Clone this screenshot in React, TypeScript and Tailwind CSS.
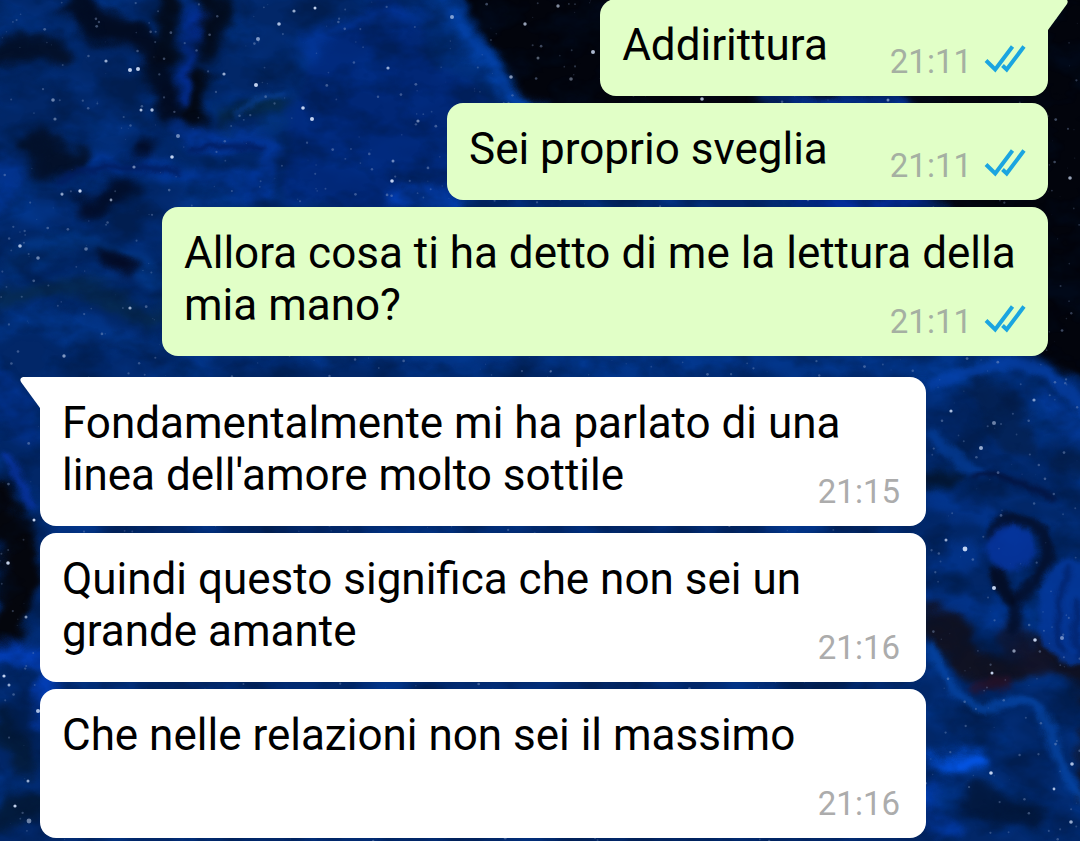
interface Message {
  id: number;
  text: string;
  time: string;
  sent: boolean;
  tail?: boolean;
}

const messages: Message[] = [
  { id: 1, text: "Addirittura", time: "21:11", sent: true, tail: true },
  { id: 2, text: "Sei proprio sveglia", time: "21:11", sent: true },
  { id: 3, text: "Allora cosa ti ha detto di me la lettura della mia mano?", time: "21:11", sent: true },
  { id: 4, text: "Fondamentalmente mi ha parlato di una linea dell'amore molto sottile", time: "21:15", sent: false, tail: true },
  { id: 5, text: "Quindi questo significa che non sei un grande amante", time: "21:16", sent: false },
  { id: 6, text: "Che nelle relazioni non sei il massimo", time: "21:16", sent: false },
];

// x, y, radius, opacity
const brightStars = [
  [130, 70, 2, 0.9], [138, 69, 2, 0.9], [106, 61, 1.6, 0.7], [141, 110, 1.5, 0.8], [152, 110, 1.7, 0.8],
  [53, 100, 1.8, 0.5], [55, 119, 1.6, 0.4], [172, 157, 1.8, 0.9], [178, 136, 2, 0.5], [256, 85, 2, 0.9],
  [224, 74, 1.6, 0.7], [258, 39, 2, 0.6], [279, 24, 1.8, 0.8], [294, 11, 1.6, 0.7], [315, 8, 1.5, 0.9],
  [303, 108, 1.8, 0.9], [312, 119, 2, 0.9], [392, 181, 1.8, 0.9], [393, 161, 1.5, 0.5], [418, 121, 1.6, 0.5],
  [388, 68, 1.6, 0.7], [80, 191, 1.7, 0.9], [62, 194, 1.6, 0.6], [111, 200, 1.4, 0.6], [134, 167, 1.6, 0.5],
  [20, 246, 1.8, 0.8], [38, 258, 1.8, 0.5], [86, 249, 1.8, 0.4], [130, 308, 1.6, 0.7], [64, 356, 1.7, 0.6],
  [34, 520, 1.5, 0.9], [8, 563, 1.8, 0.9], [26, 617, 1.5, 0.6], [4, 676, 1.6, 0.9], [9, 685, 1.5, 0.7],
  [38, 711, 2, 0.8], [15, 806, 1.6, 0.9], [29, 821, 2.4, 0.5], [28, 781, 1.5, 0.7],
  [951, 411, 1.6, 0.8], [994, 423, 2, 0.5], [981, 448, 2, 0.7], [965, 549, 2.4, 0.9], [946, 540, 1.5, 0.7],
  [994, 588, 2, 0.9], [1035, 640, 1.8, 0.9], [992, 673, 1.5, 0.9], [1014, 651, 1.7, 0.6], [991, 773, 1.8, 0.9],
  [1072, 764, 1.8, 0.8], [1071, 822, 1.8, 0.7], [1054, 789, 1.4, 0.8], [1034, 400, 1.6, 0.6], [1062, 638, 2, 0.5],
  [525, 24, 1.7, 0.7], [558, 6, 1.7, 0.6], [593, 52, 2, 0.8], [511, 77, 1.8, 0.6], [538, 58, 1.5, 0.4], [571, 79, 1.8, 0.4],
  [702, 99, 1.8, 0.8], [888, 100, 1.5, 0.5], [1070, 178, 1.8, 0.7], [452, 17, 2, 0.6],
];

// faint dust scattered over the whole wallpaper, same positions on each render
const dust = Array.from({ length: 1600 }, (_, i) => {
  const a = Math.abs(Math.sin(i * 12.9898) * 43758.5453) % 1;
  const b = Math.abs(Math.sin(i * 78.233 + 4) * 12543.123) % 1;
  const c = Math.abs(Math.sin(i * 39.425 + 9) * 9631.77) % 1;
  return [a * 1080, b * 841, 0.5 + c * 0.9, 0.1 + c * 0.35];
});

function Wallpaper() {
  return (
    <svg
      className="absolute inset-0 h-full w-full"
      viewBox="0 0 1080 841"
      preserveAspectRatio="xMidYMid slice"
      aria-hidden="true"
    >
      <defs>
        <filter id="swirl" x="-5%" y="-5%" width="110%" height="110%" colorInterpolationFilters="sRGB">
          <feGaussianBlur stdDeviation="5" result="soft" />
          <feTurbulence type="fractalNoise" baseFrequency="0.018 0.024" numOctaves="3" seed="8" result="noise" />
          <feDisplacementMap in="soft" in2="noise" scale="36" xChannelSelector="R" yChannelSelector="G" />
        </filter>
        <filter id="fine" x="-5%" y="-5%" width="110%" height="110%" colorInterpolationFilters="sRGB">
          <feGaussianBlur stdDeviation="2.4" result="soft" />
          <feTurbulence type="fractalNoise" baseFrequency="0.04" numOctaves="3" seed="3" result="noise" />
          <feDisplacementMap in="soft" in2="noise" scale="12" xChannelSelector="R" yChannelSelector="G" />
        </filter>
        <filter id="clouds" x="0" y="0" width="100%" height="100%" colorInterpolationFilters="sRGB">
          <feTurbulence type="fractalNoise" baseFrequency="0.02 0.03" numOctaves="4" seed="21" />
          <feColorMatrix values="0 0 0 0 0  0 0 0 0 0.07  0 0 0 0 0.18  3 0 0 0 -1.3" />
        </filter>
        <filter id="glow" x="0" y="0" width="100%" height="100%" colorInterpolationFilters="sRGB">
          <feTurbulence type="fractalNoise" baseFrequency="0.014 0.022" numOctaves="3" seed="47" />
          <feColorMatrix values="0 0 0 0 0.01  0 0 0 0 0.26  0 0 0 0 0.66  0 2.6 0 0 -1.1" />
        </filter>
      </defs>
      <rect width="1080" height="841" fill="#022768" />
      <rect width="1080" height="841" filter="url(#glow)" opacity="0.55" />

      <g filter="url(#swirl)" strokeLinecap="round" fill="none">
        {/* black sky at the top right */}
        <path d="M455 -20 C470 40 520 80 560 130 L700 150 L1000 220 L1030 350 L1110 400 L1110 -20 Z" fill="#02040c" />
        <path d="M385 -10 C430 30 440 60 475 90 L540 150 L400 220 L280 200 L300 60 Z" fill="#022880" opacity="0.6" />
        <path d="M440 5 C465 50 500 80 535 115" stroke="#0341a6" strokeWidth="16" />
        <path d="M300 50 C330 20 370 20 420 10" stroke="#0338a0" strokeWidth="16" opacity="0.8" />
        <path d="M770 101 H900" stroke="#03308f" strokeWidth="20" />
        <path d="M800 203 H930" stroke="#032d9c" strokeWidth="14" />

        {/* top left */}
        <path d="M80 10 C110 30 130 30 160 70 L170 110" stroke="#020b1f" strokeWidth="28" opacity="0.95" />
        <path d="M215 -10 L208 50 M170 0 L165 60" stroke="#030b18" strokeWidth="24" opacity="0.95" />
        <path d="M200 80 L194 112" stroke="#030812" strokeWidth="24" />
        <path d="M195 5 L186 90" stroke="#03309a" strokeWidth="13" />
        <path d="M0 55 L60 50 M30 150 L70 160 M50 175 L40 140" stroke="#030d20" strokeWidth="26" opacity="0.85" />
        <path d="M225 120 L285 110" stroke="#052a4e" strokeWidth="18" />
        <path d="M180 125 C230 150 240 130 270 150 L255 190" stroke="#043aa4" strokeWidth="22" opacity="0.75" />
        <path d="M0 165 C20 170 30 190 0 205 M90 165 C130 160 180 180 260 185" stroke="#0339a0" strokeWidth="20" opacity="0.7" />
        <path d="M85 205 L130 190 M140 148 L150 152" stroke="#020e2c" strokeWidth="20" />
        <path d="M400 195 L450 200" stroke="#0444bd" strokeWidth="26" opacity="0.8" />

        {/* left edge */}
        <path d="M10 265 C50 230 110 240 160 280" stroke="#033a8c" strokeWidth="18" opacity="0.7" />
        <path d="M110 262 L122 268" stroke="#030b25" strokeWidth="20" />
        <path d="M0 300 C60 270 90 300 160 310" stroke="#06294e" strokeWidth="22" opacity="0.8" />
        <path d="M0 330 C50 310 100 340 160 345 L1000 368" stroke="#033c98" strokeWidth="24" opacity="0.65" />
        <path d="M-5 380 L25 430" stroke="#03359a" strokeWidth="36" opacity="0.6" />
        <path d="M-5 500 L15 530 L20 560 L8 630" stroke="#04060d" strokeWidth="38" />
        <path d="M0 652 L60 664 L45 720" stroke="#0340bd" strokeWidth="20" opacity="0.9" />
        <path d="M5 720 L25 760 M0 820 L30 800" stroke="#041a35" strokeWidth="28" opacity="0.8" />

        {/* right edge */}
        <path d="M980 388 L1020 440 M1060 462 L1090 470" stroke="#041f4c" strokeWidth="28" opacity="0.75" />
        <path d="M1050 405 L1080 430" stroke="#043ca0" strokeWidth="26" opacity="0.7" />
        <path d="M930 475 L960 480" stroke="#031733" strokeWidth="18" />
        <path d="M935 500 L980 520 M930 560 L980 555 M940 600 L1000 615" stroke="#033a9c" strokeWidth="24" opacity="0.6" />
        <path d="M940 620 C960 660 980 680 1020 665 L1050 650 L1100 700 L1095 790" stroke="#11111f" strokeWidth="32" opacity="0.95" />
        <path d="M1010 640 L1040 665" stroke="#14162c" strokeWidth="28" opacity="0.7" />
        <path d="M980 800 L1030 820" stroke="#031536" strokeWidth="30" opacity="0.8" />
        <path d="M935 765 L975 760" stroke="#0353e0" strokeWidth="20" />
        <path d="M930 800 L950 830" stroke="#0340b8" strokeWidth="24" opacity="0.8" />
      </g>

      <rect width="1080" height="841" filter="url(#clouds)" opacity="0.4" />

      <g filter="url(#fine)" strokeLinecap="round" fill="none">
        <path d="M935 385 C970 368 1010 355 1040 370 C1060 380 1070 390 1085 410" stroke="#0644b0" strokeWidth="13" opacity="0.65" />
        <path d="M932 435 C950 452 960 462 980 474" stroke="#0545a8" strokeWidth="12" opacity="0.6" />
        <path d="M975 476 C1000 468 1020 485 1052 498" stroke="#03133f" strokeWidth="6" />
        <path d="M990 535 C1000 518 1030 512 1046 535 C1054 560 1036 580 1018 600 L1014 630" stroke="#030f2c" strokeWidth="12" opacity="0.9" />
        <path d="M995 572 L1012 598" stroke="#030b20" strokeWidth="15" opacity="0.9" />
        <ellipse cx="1010" cy="548" rx="26" ry="23" fill="#0635a0" opacity="0.85" />
        <ellipse cx="1072" cy="612" rx="36" ry="52" fill="#04389c" opacity="0.85" />
        <path d="M1070 570 C1055 600 1055 620 1065 650 M1078 600 C1072 620 1078 640 1080 655" stroke="#02246e" strokeWidth="6" />
        <path d="M930 650 C950 690 965 712 995 708 C1020 690 1040 700 1050 730 C1055 760 1070 785 1085 800" stroke="#0547a8" strokeWidth="10" opacity="0.75" />
        <path d="M975 688 L1005 682" stroke="#2a1128" strokeWidth="12" opacity="0.7" />
        <path d="M60 180 C90 160 140 168 180 172 M190 150 C215 148 235 142 262 148" stroke="#021d60" strokeWidth="6" />
        <path d="M235 112 C250 104 260 98 285 92" stroke="#0a46a8" strokeWidth="6" opacity="0.6" />
        <path d="M5 455 C20 465 20 490 30 505" stroke="#0a38b4" strokeWidth="7" opacity="0.7" />
      </g>

      <g fill="#8fa4cc">
        {dust.map(([x, y, r, o], i) => (
          <circle key={i} cx={x} cy={y} r={r} opacity={o} />
        ))}
      </g>
      <g fill="#d7e6ff">
        {brightStars.map(([x, y, r, o], i) => (
          <circle key={i} cx={x} cy={y} r={r} opacity={o} />
        ))}
      </g>
    </svg>
  );
}

function DoubleCheck() {
  return (
    <svg
      className="mb-1.5"
      width="42"
      height="28"
      viewBox="0 0 42 28"
      fill="none"
      stroke="#1ba5e0"
      strokeWidth="4"
      role="img"
      aria-label="Letto"
    >
      <path d="M2 15.5 L11.2 24.5 L28.5 1.5" />
      <path d="M18.5 20.5 L22.7 24.5 L40 1.5" />
    </svg>
  );
}

function Tail({ sent }: { sent: boolean }) {
  return sent ? (
    <svg className="absolute top-0 left-full -ml-px" width="21" height="32" viewBox="0 0 21 32" fill="#e1ffc7" aria-hidden="true">
      <path d="M0 0 H18 Q22 1 20 5 L1 31 H0 Z" />
    </svg>
  ) : (
    <svg className="absolute top-0 right-full -mr-px" width="21" height="32" viewBox="0 0 21 32" fill="#ffffff" aria-hidden="true">
      <path d="M21 0 H3 Q-1 1 1 5 L20 31 H21 Z" />
    </svg>
  );
}

function Bubble({ message }: { message: Message }) {
  const { text, time, sent, tail } = message;
  const side = sent ? "bg-[#e1ffc7]" : "bg-white";
  const corner = tail ? (sent ? "rounded-tr-none" : "rounded-tl-none") : "";

  return (
    <div className={`relative flow-root max-w-[886px] rounded-2xl px-[22px] pt-5 pb-3.5 ${side} ${corner}`}>
      {tail ? <Tail sent={sent} /> : null}
      <span className="text-[44px] leading-[52px] text-black">{text}</span>
      <span
        className={`float-right mt-[23px] ml-[62px] flex h-10 items-center gap-3 text-[33px] leading-10 ${
          sent ? "text-[#a5b0a2]" : "mr-1 text-[#acacac]"
        }`}
      >
        <time>{time}</time>
        {sent ? <DoubleCheck /> : null}
      </span>
    </div>
  );
}

export default function App() {
  return (
    <main className="relative min-h-screen overflow-hidden bg-[#022768] font-[Roboto,sans-serif]">
      <Wallpaper />
      <ul className="relative -mt-px flex flex-col gap-[7px] pr-8 pl-10">
        {messages.map((message, index) => {
          const newSender = index > 0 && messages[index - 1].sent !== message.sent;
          return (
            <li
              key={message.id}
              className={`flex ${message.sent ? "justify-end" : "justify-start"} ${newSender ? "mt-3.5" : ""}`}
            >
              <Bubble message={message} />
            </li>
          );
        })}
      </ul>
    </main>
  );
}
